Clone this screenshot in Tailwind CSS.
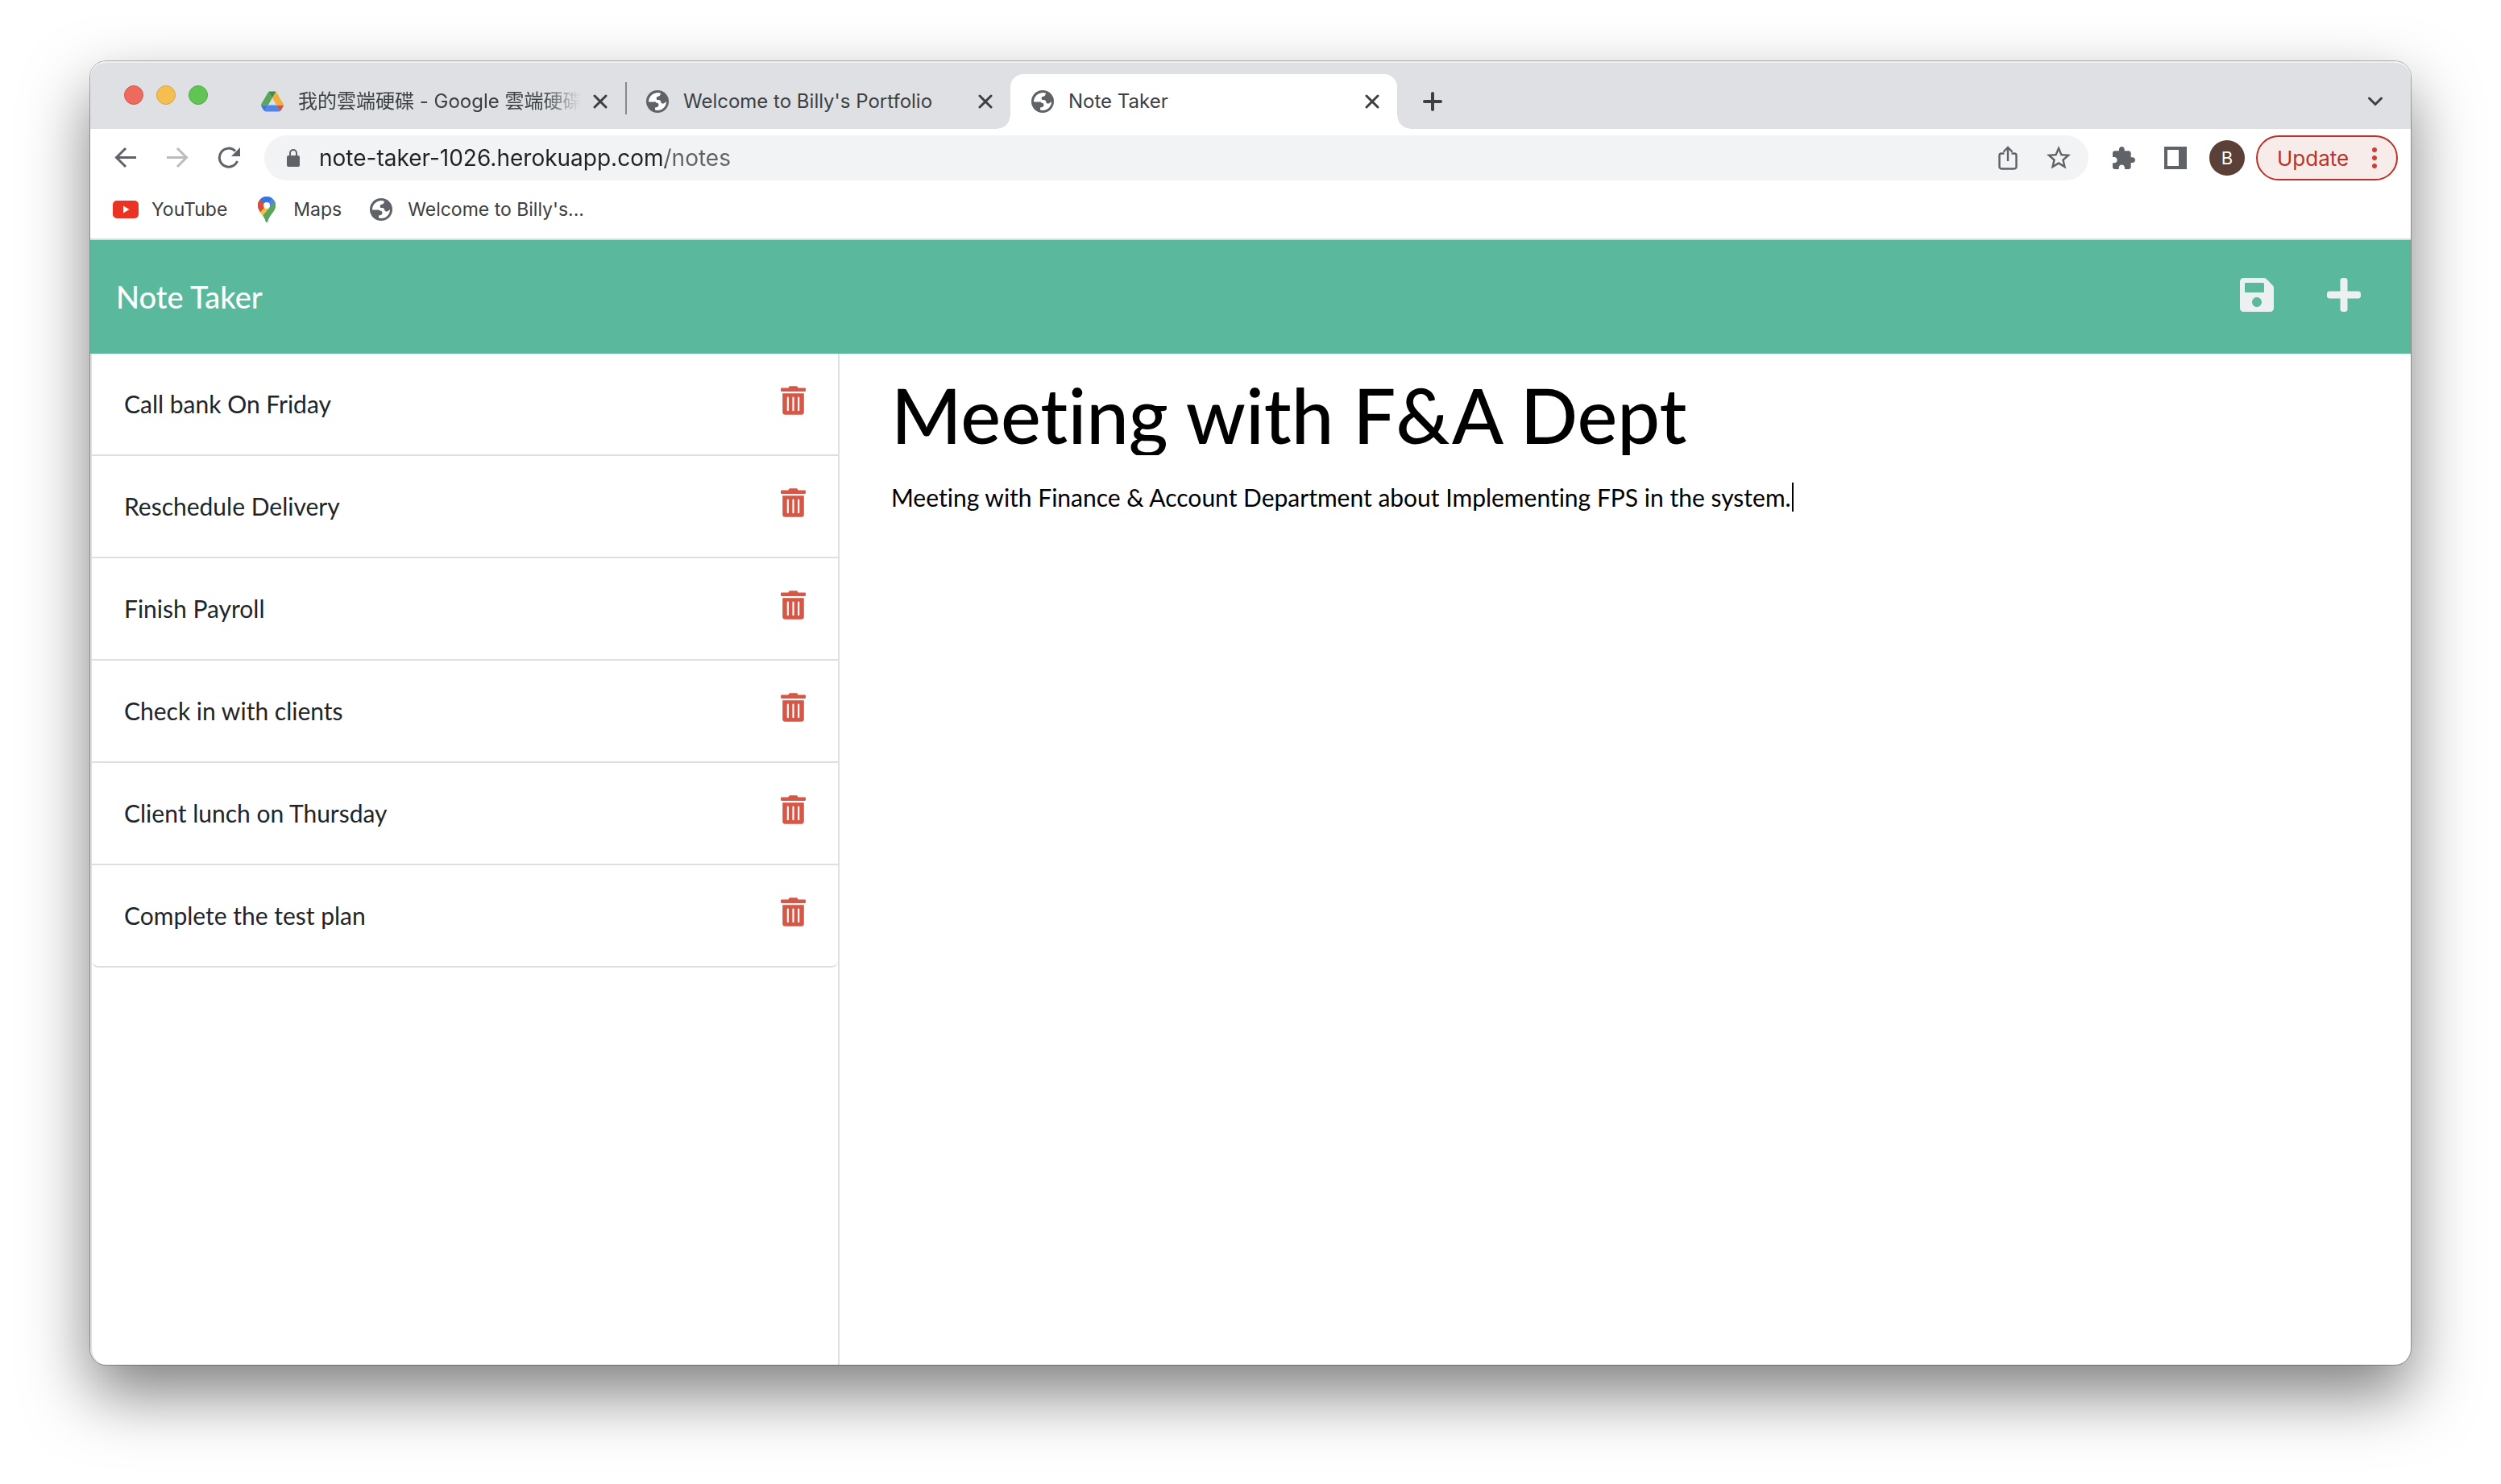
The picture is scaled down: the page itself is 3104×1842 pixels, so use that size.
<!DOCTYPE html>
<html lang="en">
<head>
<meta charset="utf-8">
<title>Note Taker</title>
<script src="https://cdn.jsdelivr.net/npm/@tailwindcss/browser@4"></script>
</head>
<body class="min-h-screen flex flex-col bg-white px-28 pt-[76px] pb-[148px] font-[Inter,'Noto_Sans_CJK_TC',sans-serif] text-[#3c4043] overflow-x-hidden">
<svg class="hidden" aria-hidden="true">
  <symbol id="globe" viewBox="0 0 28 28">
    <circle cx="14" cy="14" r="14" fill="#5f6368"/>
    <path fill="#fff" d="M3 14.5C3 8.500 7.500 3.500 14 3c1.500 0 2.800.3 4 .8-.3 2.700-1.700 3.700-3.400 4-1.600.2-1.900 1.200-1.900 2.700 0 1 .7 1.500 2 1.500 3 0 3.300 1.200 3.600 2.800.3 1.500 1.500 2.100 3 1.700 1.400-.3 2.500-1.300 3.700-2.500.1 6-4.500 11-11 11-1 0-2-.1-3-.4v-3.100c2.400 0 4.500-1 4.500-3.300 0-2-1.500-2.700-3.500-2.700V14.500z"/>
  </symbol>
  <symbol id="close" viewBox="0 0 18 18">
    <path d="M2 2l14 14M16 2L2 16" stroke="#3c4043" stroke-width="3" stroke-linecap="round"/>
  </symbol>
  <symbol id="trash" viewBox="0 0 448 512">
    <path fill="#d65745" d="M32 464a48 48 0 0 0 48 48h288a48 48 0 0 0 48-48V128H32zm272-256a16 16 0 0 1 32 0v224a16 16 0 0 1-32 0zm-96 0a16 16 0 0 1 32 0v224a16 16 0 0 1-32 0zm-96 0a16 16 0 0 1 32 0v224a16 16 0 0 1-32 0zM432 32H312l-9.400-18.700A24 24 0 0 0 281.100 0H166.800a23.720 23.720 0 0 0-21.400 13.300L136 32H16A16 16 0 0 0 0 48v32a16 16 0 0 0 16 16h416a16 16 0 0 0 16-16V48a16 16 0 0 0-16-16z"/>
  </symbol>
</svg>

<div class="flex-1 flex flex-col rounded-[20px] bg-white shadow-[0_0_0_1px_rgba(0,0,0,0.28),0_36px_80px_rgba(0,0,0,0.5)]">
  <!-- Tab strip -->
  <div class="h-[84px] flex items-center rounded-t-[20px] bg-[#dee0e4] pl-[42px] pr-[35px] text-[24px] shadow-[inset_0_2px_0_rgba(255,255,255,0.5)]">
    <div class="flex gap-4 shrink-0">
      <button aria-label="Close window" class="size-6 rounded-full bg-[#ed6a5e] border border-[#d5564b]"></button>
      <button aria-label="Minimize window" class="size-6 rounded-full bg-[#f5bf4f] border border-[#d9a33c]"></button>
      <button aria-label="Zoom window" class="size-6 rounded-full bg-[#61c554] border border-[#4fa73f]"></button>
    </div>
    <div class="self-end h-[68px] w-[478px] ml-10 flex items-center pl-[26px] pr-[22px]">
      <svg class="w-7 h-7 shrink-0" viewBox="0 0 87.300 78">
        <path d="m6.600 66.850 3.850 6.650c.8 1.400 1.950 2.500 3.300 3.300l13.750-23.800h-27.500c0 1.550.4 3.100 1.200 4.500z" fill="#3a78e8"/>
        <path d="m43.650 25-13.750-23.800c-1.350.8-2.500 1.900-3.300 3.300l-25.400 44a9.060 9.060 0 0 0-1.200 4.500h27.500z" fill="#58a65c"/>
        <path d="m73.550 76.800c1.350-.8 2.500-1.900 3.300-3.300l1.600-2.750 7.650-13.250c.8-1.400 1.200-2.950 1.200-4.500h-27.500l5.850 11.500z" fill="#db4e3c"/>
        <path d="m43.650 25 13.750-23.800c-1.350-.8-2.900-1.200-4.500-1.200h-18.500c-1.600 0-3.150.45-4.500 1.200z" fill="#3f8a48"/>
        <path d="m59.800 53h-32.300l-13.750 23.800c1.350.8 2.900 1.200 4.500 1.200h50.800c1.600 0 3.150-.45 4.500-1.200z" fill="#5086ec"/>
        <path d="m73.400 26.500-12.700-22c-.8-1.400-1.950-2.500-3.300-3.300l-13.750 23.800 16.150 28h27.450c0-1.550-.4-3.100-1.200-4.500z" fill="#f1b03b"/>
      </svg>
      <a href="#" class="ml-[18px] flex-1 min-w-0 overflow-hidden whitespace-nowrap [mask-image:linear-gradient(to_right,black_calc(100%-48px),transparent)]">我的雲端硬碟 - Google 雲端硬碟</a>
      <button aria-label="Close tab" class="ml-4 shrink-0"><svg class="size-[18px]"><use href="#close"/></svg></button>
    </div>
    <div class="w-0.5 h-10 mt-2 -mr-0.5 bg-[#85888c]"></div>
    <div class="self-end h-[68px] w-[478px] flex items-center pl-[26px] pr-[22px]">
      <svg class="size-7 shrink-0"><use href="#globe"/></svg>
      <a href="#" class="ml-[18px] flex-1 min-w-0 overflow-hidden whitespace-nowrap">Welcome to Billy's Portfolio</a>
      <button aria-label="Close tab" class="ml-4 shrink-0"><svg class="size-[18px]"><use href="#close"/></svg></button>
    </div>
    <div class="relative self-end h-[68px] w-[480px] flex items-center pl-[26px] pr-[22px] rounded-t-2xl bg-white">
      <span class="absolute bottom-0 -left-4 size-4 bg-[radial-gradient(circle_at_0_0,transparent_15px,white_16px)]"></span>
      <span class="absolute bottom-0 -right-4 size-4 bg-[radial-gradient(circle_at_100%_0,transparent_15px,white_16px)]"></span>
      <svg class="size-7 shrink-0"><use href="#globe"/></svg>
      <a href="#" class="ml-[18px] flex-1 min-w-0 overflow-hidden whitespace-nowrap">Note Taker</a>
      <button aria-label="Close tab" class="ml-4 shrink-0"><svg class="size-[18px]"><use href="#close"/></svg></button>
    </div>
    <button aria-label="New tab" class="mt-4 ml-8"><svg class="size-6" viewBox="0 0 24 24"><path d="M12 2v20M2 12h20" stroke="#3c4043" stroke-width="4" stroke-linecap="round"/></svg></button>
    <button aria-label="Search tabs" class="mt-4 ml-auto"><svg class="w-[18px] h-3" viewBox="0 0 18 12"><path d="M1.500 2L9 9.500 16.500 2" fill="none" stroke="#3c4043" stroke-width="3" stroke-linecap="round"/></svg></button>
  </div>

  <!-- Toolbar -->
  <div class="flex items-center pt-2 pl-[30px] pr-4">
    <div class="flex gap-9">
      <button aria-label="Back"><svg class="size-7" viewBox="0 0 28 28" fill="none" stroke="#5f6368" stroke-width="3"><path d="M27 13.500H3M14 2L2.500 13.500 14 25"/></svg></button>
      <button aria-label="Forward"><svg class="size-7" viewBox="0 0 28 28" fill="none" stroke="#babcbe" stroke-width="3"><path d="M1 13.500h24M14 2l11.500 11.500L14 25"/></svg></button>
      <button aria-label="Reload"><svg class="size-7" viewBox="0 0 28 28"><path d="M24.500 18A11.500 11.500 0 1 1 22 5.500" fill="none" stroke="#5f6368" stroke-width="3"/><path d="M28 1v11H17z" fill="#5f6368"/></svg></button>
    </div>
    <div class="flex-1 h-14 ml-[30px] flex items-center rounded-full bg-[#f1f3f4] pl-7 pr-[22px]">
      <svg class="w-4 h-[22px] shrink-0" viewBox="0 0 16 22"><rect y="8" width="16" height="14" rx="2" fill="#5f6368"/><path d="M4 9V5a4 4 0 0 1 8 0v4" fill="none" stroke="#5f6368" stroke-width="2"/></svg>
      <input aria-label="Address" value="note-taker-1026.herokuapp.com/notes" class="ml-6 flex-1 min-w-0 h-10 text-[28px] outline-none bg-[linear-gradient(to_right,#202124_430px,#5f6368_430px)] bg-clip-text text-transparent">
      <button aria-label="Share" class="shrink-0 ml-4"><svg class="w-6 h-[30px]" viewBox="0 0 24 30" fill="none" stroke="#5f6368" stroke-width="2.400"><path d="M7.500 9.500H4A2.500 2.500 0 0 0 1.500 12v14A2.500 2.500 0 0 0 4 28.500h16a2.500 2.500 0 0 0 2.500-2.500V12A2.500 2.500 0 0 0 20 9.500h-3.500M12 19V2.500M6.500 7.500L12 2l5.500 5.500"/></svg></button>
      <button aria-label="Bookmark this page" class="shrink-0 ml-9"><svg class="size-[30px]" viewBox="2 2 20 20"><path fill="#5f6368" d="M22 9.240l-7.190-.62L12 2 9.190 8.630 2 9.240l5.460 4.730L5.820 21 12 17.270 18.180 21l-1.630-7.030L22 9.240zM12 15.400l-3.760 2.270 1-4.280-3.320-2.880 4.380-.38L12 6.100l1.710 4.040 4.380.38-3.320 2.880 1 4.280L12 15.400z"/></svg></button>
    </div>
    <button aria-label="Extensions" class="ml-[30px]"><svg class="size-7" viewBox="2 1 21 21"><path fill="#5f6368" d="M20.500 11H19V7c0-1.100-.9-2-2-2h-4V3.500C13 2.120 11.880 1 10.500 1S8 2.120 8 3.500V5H4c-1.100 0-1.990.9-1.990 2v3.800H3.500c1.490 0 2.700 1.210 2.700 2.700s-1.210 2.700-2.700 2.700H2V20c0 1.100.9 2 2 2h3.800v-1.500c0-1.490 1.210-2.700 2.700-2.700 1.490 0 2.700 1.210 2.700 2.700V22H17c1.100 0 2-.9 2-2v-4h1.500c1.380 0 2.500-1.120 2.500-2.500S21.880 11 20.500 11z"/></svg></button>
    <button aria-label="Side panel" class="ml-9"><svg class="size-7" viewBox="0 0 28 28"><path fill="#5f6368" fill-rule="evenodd" d="M0 0h28v28H0zM4 4v20h14V4z"/></svg></button>
    <button aria-label="Profile" class="ml-7 size-11 rounded-full bg-[#5a4037] text-white text-[22px]">B</button>
    <button class="ml-[14px] w-44 h-14 flex items-center justify-between rounded-full border-2 border-[#b83228] bg-[#f8eceb] pl-6 pr-6 text-[26px] text-[#b83228]">Update
      <svg class="w-[6px] h-7" viewBox="0 0 6 28" fill="#cb3e30"><circle cx="3" cy="4" r="3"/><circle cx="3" cy="14" r="3"/><circle cx="3" cy="24" r="3"/></svg>
    </button>
  </div>

  <!-- Bookmarks bar -->
  <nav class="h-[74px] flex items-center gap-[33px] pl-7 border-b-2 border-[#dadcdf] text-[23px]">
    <a href="#" class="flex items-center gap-4"><svg class="w-8 h-[22px]" viewBox="0 0 32 22"><rect width="32" height="22" rx="5" fill="#ea3323"/><path d="M13 6.500v9l7.500-4.500z" fill="#fff"/></svg>YouTube</a>
    <a href="#" class="flex items-center gap-[17px]">
      <svg class="size-8" viewBox="0 0 32 32">
        <clipPath id="pin"><path d="M16 0a11 11 0 0 1 11 11c0 8-8 11-10 20.500a1 1 0 0 1-2 0C13 22 5 19 5 11A11 11 0 0 1 16 0z"/></clipPath>
        <g clip-path="url(#pin)">
          <path d="M0 0h32v32H0z" fill="#58a65c"/>
          <path d="M5 20.500L26 -4H0v26z" fill="#5086ec"/>
          <path d="M6 20L27 -4h5v10L12 26z" fill="#5086ec"/>
          <path d="M6.500 19L16 8l6 6L11 27H4z" fill="#f1bf42"/>
          <path d="M0 0l7.600 3.800L16 11 6 21.500H0z" fill="#db4e3c"/>
          <path d="M7.600 3.800L16 11l7.500-9L16-2 5 0z" fill="#3a74e0"/>
          <path d="M23.500 2L16 11l4 3 12-12z" fill="#5086ec"/>
          <path d="M26 6L11 24l5 9h16V6z" fill="#58a65c"/>
        </g>
        <circle cx="16" cy="11" r="4" fill="#fff"/>
      </svg>Maps</a>
    <a href="#" class="flex items-center gap-[17px]"><span class="w-8 flex justify-center"><svg class="size-7"><use href="#globe"/></svg></span>Welcome to Billy's...</a>
  </nav>

  <!-- Application -->
  <header class="flex items-center justify-between bg-[#5ab99d] pl-8 pr-[62px] py-[42px] font-[Lato,sans-serif]">
    <a href="#" class="text-[38px] leading-[57px] font-medium text-white">Note Taker</a>
    <div class="flex gap-[66px] pb-[6px]">
      <button aria-label="Save note"><svg class="size-[42px]" viewBox="0 32 448 448"><path fill="#ecf0f1" d="M433.941 129.941l-83.882-83.882A48 48 0 0 0 316.118 32H48C21.490 32 0 53.490 0 80v352c0 26.510 21.490 48 48 48h352c26.510 0 48-21.490 48-48V163.882a48 48 0 0 0-14.059-33.941zM224 416c-35.346 0-64-28.654-64-64 0-35.346 28.654-64 64-64s64 28.654 64 64c0 35.346-28.654 64-64 64zm96-304.520V212c0 6.627-5.373 12-12 12H76c-6.627 0-12-5.373-12-12V108c0-6.627 5.373-12 12-12h228.520c3.183 0 6.235 1.264 8.485 3.515l3.480 3.480A11.996 11.996 0 0 1 320 111.480z"/></svg></button>
      <button aria-label="New note"><svg class="size-[42px]" viewBox="0 32 448 448"><path fill="#ecf0f1" d="M416 208H272V64c0-17.670-14.330-32-32-32h-32c-17.670 0-32 14.330-32 32v144H32c-17.670 0-32 14.330-32 32v32c0 17.670 14.330 32 32 32h144v144c0 17.670 14.330 32 32 32h32c17.670 0 32-14.330 32-32V304h144c17.670 0 32-14.330 32-32v-32c0-17.670-14.330-32-32-32z"/></svg></button>
    </div>
  </header>

  <div class="flex-1 flex font-[Lato,sans-serif] [font-variant-ligatures:none]">
    <aside class="w-[calc((100%-90px)/3)] shrink-0 border-x-2 border-[#dedfe0] rounded-bl-[20px]">
      <ul class="text-[30px] leading-[45px] text-[#212529]">
        <li class="flex items-center justify-between px-10 py-10 border-b-2 border-[#dedfdf]"><a href="#">Call bank On Friday</a><button aria-label="Delete Call bank On Friday" class="mb-[9px]"><svg class="w-[31px] h-9"><use href="#trash"/></svg></button></li>
        <li class="flex items-center justify-between px-10 py-10 border-b-2 border-[#dedfdf]"><a href="#">Reschedule Delivery</a><button aria-label="Delete Reschedule Delivery" class="mb-[9px]"><svg class="w-[31px] h-9"><use href="#trash"/></svg></button></li>
        <li class="flex items-center justify-between px-10 py-10 border-b-2 border-[#dedfdf]"><a href="#">Finish Payroll</a><button aria-label="Delete Finish Payroll" class="mb-[9px]"><svg class="w-[31px] h-9"><use href="#trash"/></svg></button></li>
        <li class="flex items-center justify-between px-10 py-10 border-b-2 border-[#dedfdf]"><a href="#">Check in with clients</a><button aria-label="Delete Check in with clients" class="mb-[9px]"><svg class="w-[31px] h-9"><use href="#trash"/></svg></button></li>
        <li class="flex items-center justify-between px-10 py-10 border-b-2 border-[#dedfdf]"><a href="#">Client lunch on Thursday</a><button aria-label="Delete Client lunch on Thursday" class="mb-[9px]"><svg class="w-[31px] h-9"><use href="#trash"/></svg></button></li>
        <li class="flex items-center justify-between px-10 py-10 border-b-2 border-[#dedfdf] rounded-b-lg"><a href="#">Complete the test plan</a><button aria-label="Delete Complete the test plan" class="mb-[9px]"><svg class="w-[31px] h-9"><use href="#trash"/></svg></button></li>
      </ul>
    </aside>
    <main class="flex-1 flex flex-col px-16 pt-[26px] text-black">
      <input aria-label="Note title" value="Meeting with F&amp;A Dept" class="w-full h-[100px] text-[94px] leading-[100px] font-medium outline-none">
      <div class="relative mt-7 flex-1">
        <textarea aria-label="Note text" class="block w-full h-full resize-none text-[30px] leading-[48px] outline-none">Meeting with Finance &amp; Account Department about Implementing FPS in the system.</textarea>
        <span class="absolute top-[6px] left-[1118px] w-0.5 h-9 bg-black"></span>
      </div>
    </main>
  </div>
</div>
</body>
</html>
